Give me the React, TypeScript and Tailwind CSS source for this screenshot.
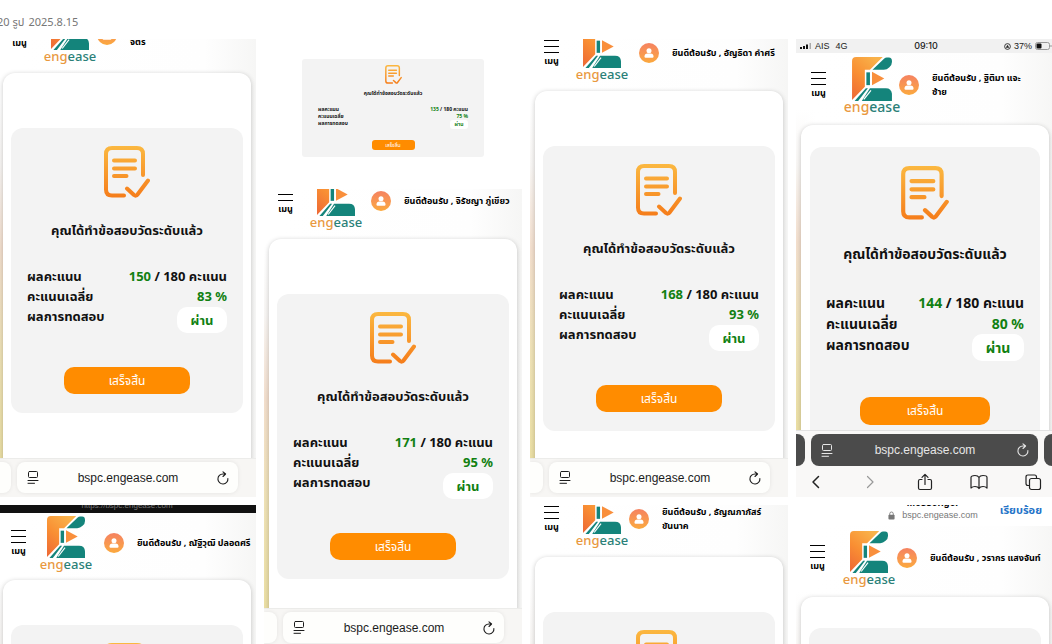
import { useId, type ReactNode } from 'react';
import clsx from 'clsx';

interface Result {
  score: number;
  percent: number;
}

interface PageProps {
  name: ReactNode;
  result: Result;
  headerClass: string;
  userClass: string;
  cardClass?: string;
  large?: boolean;
}

function EngeaseLogo({ large }: { large?: boolean }) {
  const id = useId();
  return (
    <div className="flex w-14 shrink-0 flex-col items-center">
      <svg viewBox="0 0 39 43" className={large ? 'h-[44px] w-[40px]' : 'h-[42px] w-[38px]'} aria-hidden="true">
        <defs>
          <linearGradient id={id} x1="0.7" y1="0" x2="0.1" y2="1">
            <stop offset="0" stopColor="#f9b24a" />
            <stop offset="0.5" stopColor="#f98f33" />
            <stop offset="1" stopColor="#ee6a35" />
          </linearGradient>
        </defs>
        <path d="M4 0H30L17.500 12.500H12.500V29L0 42V4Q0 0 4 0Z" fill={`url(#${id})`} />
        <path d="M36 0.5Q39 0.5 39 4V5Q39 8 36.500 10Q34 12.500 31 12.500H20L31.500 1.500Q32.500 0.500 34 0.500Z" fill="#14847b" />
        <path d="M14 15H17.500V27.500H14Z" fill="#14847b" />
        <path d="M19.500 14.500L31.500 21L19.500 27.500Z" fill="#f98f3c" />
        <path d="M17.500 30.500H33Q38.500 30.500 39 36V43H9.500Z" fill="#14847b" />
        <path d="M13.500 30.500H15.500L6 43H2.500Z" fill="#14847b" />
        <path d="M18.500 32.500L11.500 41.500" stroke="#fff" strokeWidth="1.200" />
      </svg>
      <p className={clsx("-mt-px font-['Noto_Sans'] font-medium leading-[14px]", large ? 'text-[14px]' : 'text-[13px]')}>
        <span className="text-[#e9993f]">eng</span>
        <span className="text-[#2b8078]">ease</span>
      </p>
    </div>
  );
}

function ResultIcon({ className }: { className: string }) {
  const id = useId();
  return (
    <svg viewBox="0 0 46 52" className={className} fill="none" aria-hidden="true">
      <defs>
        <linearGradient id={id} gradientUnits="userSpaceOnUse" x1="0" y1="0" x2="0" y2="52">
          <stop offset="0" stopColor="#fbb840" />
          <stop offset="1" stopColor="#f57c1a" />
        </linearGradient>
      </defs>
      <g stroke={`url(#${id})`} strokeWidth="4" strokeLinecap="round" strokeLinejoin="round">
        <path d="M20 49.500H8Q2 49.500 2 43.500V8Q2 2 8 2H33Q39 2 39 8V29" />
        <path d="M10 14.500H31V14.600M10 22.500H31V22.600M10 30H22.500V30.100" />
        <path d="M23 42.500L30 49Q32 50.500 33.500 48.500L44 34.500" />
      </g>
    </svg>
  );
}

function Avatar() {
  return (
    <span className="flex size-5 shrink-0 items-center justify-center rounded-full bg-linear-to-b from-[#f58260] to-[#fba93c]">
      <svg viewBox="0 0 10 10" className="size-[10px]" fill="#fff" aria-hidden="true">
        <circle cx="5" cy="2.800" r="2.500" />
        <path d="M0.500 8.500Q0.500 5.500 3.500 5.500H6.500Q9.500 5.500 9.500 8.500Q9.500 9.800 8.500 9.800H1.500Q0.500 9.800 0.500 8.500Z" />
      </svg>
    </span>
  );
}

function PageHeader({ name, headerClass, userClass, large }: Omit<PageProps, 'result' | 'cardClass'>) {
  return (
    <header className={clsx('flex shrink-0 items-center', headerClass)}>
      <button className="flex w-[15px] shrink-0 flex-col items-center text-black">
        <span className="flex w-full flex-col gap-[5px]">
          <span className="h-px bg-black" />
          <span className="h-px bg-black" />
          <span className="h-px bg-black" />
        </span>
        <span className="mt-0.5 text-[9px] leading-3 font-bold whitespace-nowrap">เมนู</span>
      </button>
      <EngeaseLogo large={large} />
      <div className={clsx('flex items-center gap-[13px]', userClass)}>
        <Avatar />
        <p className="text-[9px] leading-[14px] font-bold whitespace-nowrap text-black">{name}</p>
      </div>
    </header>
  );
}

function ResultPanel({ result, large }: { result: Result; large?: boolean }) {
  return (
    <section
      className={clsx(
        'flex flex-col items-center rounded-xl bg-[#f3f3f3] px-4 pb-[19px] text-[#111]',
        large ? 'pt-[19px] text-[14px]' : 'pt-[18px] text-[13px]',
      )}
    >
      <ResultIcon className={large ? 'h-[54px] w-[48px]' : 'h-[52px] w-[46px]'} />
      <h2 className={clsx('leading-5 font-bold', large ? 'mt-6' : 'mt-[22px]')}>คุณได้ทำข้อสอบวัดระดับแล้ว</h2>
      <dl
        className={clsx(
          'grid w-full grid-cols-[auto_auto] justify-between font-bold',
          large ? 'mt-[28px] leading-[21px]' : 'mt-[26px] leading-5',
        )}
      >
        <dt>ผลคะแนน</dt>
        <dd className="text-right">
          <span className="text-[#118011]">{result.score}</span> / 180 คะแนน
        </dd>
        <dt>คะแนนเฉลี่ย</dt>
        <dd className="text-right text-[#118011]">{result.percent} %</dd>
        <dt>ผลการทดสอบ</dt>
        <dd className="justify-self-end">
          <span
            className={clsx(
              'flex items-center justify-center rounded-[10px] bg-white text-[#118011]',
              large ? 'h-[27px] w-[52px]' : 'mt-px h-[26px] w-[50px]',
            )}
          >
            ผ่าน
          </span>
        </dd>
      </dl>
      <button
        className={clsx(
          'rounded-[10px] bg-[#ff8c00] text-[12px] text-white',
          large ? 'mt-9 h-7 w-[130px]' : 'mt-[34px] h-[27px] w-[126px]',
        )}
      >
        เสร็จสิ้น
      </button>
    </section>
  );
}

function ResultPage({ name, result, headerClass, userClass, cardClass = 'px-2 pt-[55px]', large }: PageProps) {
  return (
    <div className="flex min-h-0 flex-1 flex-col overflow-hidden bg-[linear-gradient(to_right,transparent_2%,#fff_8%,#fefefe_80%,#f6f6f5_100%),linear-gradient(to_bottom,#fff_15%,#f8f6f4_30%,#f3dfce_50%,#efe2b6_75%,#ebdfa4_100%)]">
      <PageHeader name={name} headerClass={headerClass} userClass={userClass} large={large} />
      <div className={clsx('mx-[5px] min-h-[440px] flex-1 rounded-xl bg-white shadow-[0_1px_5px_rgba(0,0,0,0.22)]', cardClass)}>
        <ResultPanel result={result} large={large} />
      </div>
    </div>
  );
}

function PageMenuIcon() {
  return (
    <svg viewBox="0 0 12 13" className="h-[13px] w-3 shrink-0" fill="none" stroke="currentColor" strokeLinecap="round" aria-hidden="true">
      <rect x="1.500" y="0.500" width="9" height="6" rx="1" />
      <path d="M1 9.500H11M1 12.300H7.500" />
    </svg>
  );
}

function ReloadIcon() {
  return (
    <svg viewBox="0 0 12 14" className="h-[14px] w-3" fill="none" stroke="currentColor" strokeWidth="1.100" strokeLinecap="round" strokeLinejoin="round" aria-hidden="true">
      <path d="M10.900 7.500A5 5 0 1 1 6 3H8.500M6 0.800L8.600 3L6 5.500" />
    </svg>
  );
}

function AddressBar({ dark }: { dark?: boolean }) {
  const tone = dark ? 'bg-[#4b4b4b] text-[#e6e6e6]' : 'bg-[#fefefc] text-[#1c1c1c] shadow-[0_0_4px_rgba(0,0,0,0.08)]';
  return (
    <div className={clsx('flex gap-1.5', dark ? 'h-8' : 'h-[31px]')}>
      <span className={clsx('shrink-0 rounded-r-lg', dark ? 'w-[9px]' : 'w-[13px]', tone)} />
      <div className={clsx('flex min-w-0 flex-1 items-center rounded-lg pr-[9px] pl-[10px]', !dark && 'mr-[18px]', tone)}>
        <PageMenuIcon />
        <input
          className="min-w-0 flex-1 bg-transparent text-center font-['Liberation_Sans',sans-serif] text-[12px]"
          aria-label="Address"
          readOnly
          value="bspc.engease.com"
        />
        <button aria-label="Reload">
          <ReloadIcon />
        </button>
      </div>
      {dark && <span className={clsx('w-[10px] shrink-0 rounded-l-lg', tone)} />}
    </div>
  );
}

function ToolbarButton({ label, className, children }: { label: string; className?: string; children: ReactNode }) {
  return (
    <button aria-label={label} className={clsx('flex w-[18px] justify-center', className)}>
      <svg
        viewBox="0 0 18 18"
        className="size-[18px]"
        fill="none"
        stroke="currentColor"
        strokeWidth="1.200"
        strokeLinecap="round"
        strokeLinejoin="round"
        aria-hidden="true"
      >
        {children}
      </svg>
    </button>
  );
}

function Toolbar() {
  return (
    <nav className="flex flex-1 items-center justify-between pr-3 pl-[11px] text-[#222]">
      <ToolbarButton label="Back">
        <path d="M11.500 3.500L6 9L11.500 14.500" strokeWidth="1.500" />
      </ToolbarButton>
      <ToolbarButton label="Forward" className="text-[#999]">
        <path d="M6.500 3.500L12 9L6.500 14.500" />
      </ToolbarButton>
      <ToolbarButton label="Share">
        <path d="M6 6.500H4Q2.500 6.500 2.500 8V15Q2.500 16.500 4 16.500H14Q15.500 16.500 15.500 15V8Q15.500 6.500 14 6.500H12M9 11.500V1.500M6 4.300L9 1.300L12 4.300" />
      </ToolbarButton>
      <ToolbarButton label="Bookmarks">
        <path d="M9 4.500Q8 2.500 5 2.500Q1 2.500 1 4.500V15Q2.500 13.500 5 13.500Q8 13.500 9 15.500Q10 13.500 13 13.500Q15.500 13.500 17 15V4.500Q17 2.500 13 2.500Q10 2.500 9 4.500ZM9 4.500V15" />
      </ToolbarButton>
      <ToolbarButton label="Tabs">
        <path d="M5.500 12.500H4Q2 12.500 2 10.500V4Q2 2 4 2H10.500Q12.500 2 12.500 4V5.500" />
        <rect x="5.500" y="5.500" width="11" height="11" rx="2" />
      </ToolbarButton>
    </nav>
  );
}

function LightBar() {
  return (
    <footer className="h-[39px] shrink-0 border-t border-[#ececea] bg-[#f7f6f4] py-[3px]">
      <AddressBar />
    </footer>
  );
}

function StatusBar() {
  return (
    <div className="flex h-[14px] shrink-0 items-center bg-[#f1f1f1] pr-0.5 pl-1 font-['Liberation_Sans',sans-serif] text-[9px] leading-[14px] text-[#222]">
      <div className="flex flex-1 items-center">
        <svg viewBox="0 0 12 6" className="mr-[3px] h-1.5 w-3" aria-hidden="true">
          <path d="M0 4H2V6H0ZM3 3H5V6H3Z" fill="#111" />
          <path d="M6 1.500H8V6H6Z" fill="#111" />
          <path d="M9.500 0H11V6H9.500Z" fill="#aaa" />
        </svg>
        <span>AIS</span>
        <span className="ml-1.5">4G</span>
      </div>
      <span className="font-[Inter,sans-serif] font-medium">09:10</span>
      <div className="flex flex-1 items-center justify-end gap-[3px]">
        <svg viewBox="0 0 8 8" className="size-[7px]" fill="none" stroke="#222" aria-hidden="true">
          <circle cx="4" cy="4" r="3.300" />
          <path d="M4 2L6 5.500H2Z" fill="#222" stroke="none" />
        </svg>
        <span>37%</span>
        <svg viewBox="0 0 17 8" className="h-2 w-[17px]" fill="none" aria-hidden="true">
          <rect x="0.500" y="0.500" width="14" height="7" rx="2" stroke="#999" />
          <rect x="1.500" y="1.500" width="5" height="5" rx="1" fill="#111" />
          <path d="M16 3V5" stroke="#999" />
        </svg>
      </div>
    </div>
  );
}

function DesktopResult() {
  return (
    <div className="h-[142px] bg-white px-[38px] pt-5">
      <section className="flex h-[98px] flex-col items-center rounded-[3px] bg-[#f3f3f3] px-4 pt-1.5 text-[5px] text-[#111]">
        <ResultIcon className="h-[19px] w-[17px]" />
        <h2 className="mt-1.5 leading-[7px] font-bold">คุณได้ทำข้อสอบวัดระดับแล้ว</h2>
        <dl className="mt-[9px] grid w-full grid-cols-[auto_auto] justify-between leading-[7px] font-bold">
          <dt>ผลคะแนน</dt>
          <dd className="text-right">
            <span className="text-[#118011]">135</span> / 180 คะแนน
          </dd>
          <dt>คะแนนเฉลี่ย</dt>
          <dd className="text-right text-[#118011]">75 %</dd>
          <dt>ผลการทดสอบ</dt>
          <dd className="justify-self-end">
            <span className="flex h-[9px] w-[18px] items-center justify-center rounded-[3px] bg-white text-[#118011]">ผ่าน</span>
          </dd>
        </dl>
        <button className="mt-[11px] h-[10px] w-[43px] rounded-[3px] bg-[#ff8c00] leading-[10px] text-white">เสร็จสิ้น</button>
      </section>
    </div>
  );
}

export default function App() {
  return (
    <main className="flex h-screen flex-col overflow-hidden bg-white font-['Noto_Sans','Noto_Sans_Thai',sans-serif]">
      <p className="-ml-[3px] flex h-[39px] shrink-0 gap-1 pt-3 text-[11px] leading-5 text-[#777]">
        <span>20 รูป</span>
        <span>2025.8.15</span>
      </p>
      <div className="-mx-0.5 grid min-h-0 flex-1 grid-cols-4 gap-2">
        <div className="flex flex-col gap-2">
          <article className="flex h-[458px] shrink-0 flex-col overflow-hidden">
            <ResultPage
              name={<>ยินดีต้อนรับ ,<br />จิตร</>}
              result={{ score: 150, percent: 83 }}
              headerClass="-mt-[38px] h-[72px] gap-[15px] pb-1 pl-[14px]"
              userClass="-ml-4"
            />
            <LightBar />
          </article>
          <article className="flex h-[458px] shrink-0 flex-col overflow-hidden">
            <div className="flex h-2 shrink-0 items-end justify-center overflow-hidden bg-[#111] font-['Liberation_Sans',sans-serif] text-[8px] leading-[14px] text-[#777]">
              https://bspc.engease.com
            </div>
            <ResultPage
              name="ยินดีต้อนรับ , ณัฐิวุฒิ ปลอดศรี"
              result={{ score: 150, percent: 83 }}
              headerClass="h-[67px] gap-3 pb-[7px] pl-[13px]"
              userClass="-ml-[2px]"
              cardClass="px-2 pt-[45px]"
            />
          </article>
        </div>

        <div className="flex flex-col gap-2">
          <DesktopResult />
          <article className="flex h-[458px] shrink-0 flex-col overflow-hidden">
            <ResultPage
              name="ยินดีต้อนรับ , จิรัชญา ภู่เขียว"
              result={{ score: 171, percent: 95 }}
              headerClass="-mt-[22px] h-[72px] gap-[15px] pb-1 pl-[14px]"
              userClass="-ml-2"
            />
            <LightBar />
          </article>
        </div>

        <div className="flex flex-col gap-2">
          <article className="flex h-[458px] shrink-0 flex-col overflow-hidden">
            <ResultPage
              name="ยินดีต้อนรับ , อัญธิดา คำศรี"
              result={{ score: 168, percent: 93 }}
              headerClass="-mt-5 h-[72px] gap-[15px] pb-1 pl-[14px]"
              userClass="-ml-1.5"
            />
            <LightBar />
          </article>
          <article className="flex h-[458px] shrink-0 flex-col overflow-hidden">
            <ResultPage
              name={<>ยินดีต้อนรับ , ธัญณภาภัสร์<br />ขันนาค</>}
              result={{ score: 168, percent: 93 }}
              headerClass="-mt-5 h-[72px] gap-[15px] pb-1 pl-[14px]"
              userClass="-ml-4"
            />
          </article>
        </div>

        <div className="flex flex-col gap-2">
          <article className="flex h-[458px] shrink-0 flex-col overflow-hidden">
            <StatusBar />
            <ResultPage
              name={<>ยินดีต้อนรับ , ฐิติมา แจะ<br />ซ้าย</>}
              result={{ score: 144, percent: 80 }}
              headerClass="h-[72px] gap-[18px] pb-2 pl-[15px]"
              userClass="-ml-[19px]"
              cardClass="px-[9px] pt-[22px]"
              large
            />
            <footer className="flex h-[67px] shrink-0 flex-col border-t border-[#e2e2e2] bg-[#f9f8f7] pt-[3px]">
              <AddressBar dark />
              <Toolbar />
            </footer>
          </article>
          <article className="flex h-[458px] shrink-0 flex-col overflow-hidden">
            <div className="grid h-[21px] shrink-0 grid-cols-[1fr_auto_1fr] bg-white">
              <span />
              <div className="-mt-2 ml-4 flex flex-col items-center font-['Liberation_Sans',sans-serif]">
                <span className="text-[10px] leading-[12px] font-bold text-black">Messenger</span>
                <span className="flex items-center gap-[7px] text-[9px] leading-[12px] text-[#777]">
                  <svg viewBox="0 0 8 10" className="h-[9px] w-[7px]" fill="#777" aria-hidden="true">
                    <rect x="0.500" y="4" width="7" height="5.500" rx="1" />
                    <path d="M2 4.500V3Q2 1 4 1Q6 1 6 3V4.500" fill="none" stroke="#777" />
                  </svg>
                  bspc.engease.com
                </span>
              </div>
              <a href="#" className="justify-self-end pr-3 text-[11px] leading-[10px] font-bold text-[#2574c8]">เรียบร้อย</a>
            </div>
            <ResultPage
              name="ยินดีต้อนรับ , วรากร แสงจันท์"
              result={{ score: 144, percent: 80 }}
              headerClass="h-[71px] gap-4 pb-[7px] pl-[14px]"
              userClass="-ml-4"
              cardClass="px-2 pt-[31px]"
            />
          </article>
        </div>
      </div>
    </main>
  );
}
